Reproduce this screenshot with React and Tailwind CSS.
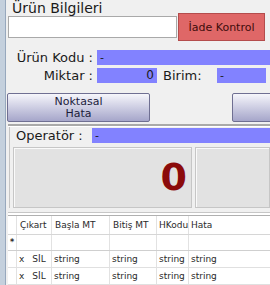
export default function App() {
  const rows = [
    { x: "x", sil: "SİL" },
    { x: "x", sil: "SİL" },
  ];

  return (
    <div className="w-[270px] h-[285px] overflow-hidden bg-[#f0f0f0] flex font-['DejaVu_Sans',sans-serif] text-[#1a1a1a]">
      {/* left strip */}
      <div className="w-[6px] shrink-0 bg-[#c4d0dd] border-r border-[#97a8bd]" />

      <div className="flex-1 min-w-0 flex flex-col pl-[2px]">
        {/* Title */}
        <div className="h-[13px] pl-[4px] text-[14px] leading-[16px] whitespace-nowrap">Ürün Bilgileri</div>

        {/* Input + İade Kontrol */}
        <div className="flex items-center h-[28px] gap-[1px]">
          <div className="w-[169px] h-[22px] bg-white border border-[#a9a9a9]" />
          <button className="w-[87px] h-[28px] bg-[#df6767] border border-[#b44c4c] text-[11px] text-[#3e0c0c] leading-none">
            İade Kontrol
          </button>
        </div>

        {/* Ürün Kodu */}
        <div className="flex items-center h-[15px] mt-[9px]">
          <div className="w-[85px] text-right text-[13px] leading-[15px] whitespace-nowrap">Ürün Kodu :</div>
          <div className="ml-[4px] flex-1 h-[15px] bg-[#8282ff] text-[11px] leading-[15px] pl-[3px]">-</div>
        </div>

        {/* Miktar / Birim */}
        <div className="flex items-center h-[15px] mt-[3px]">
          <div className="w-[85px] text-right text-[13px] leading-[15px] whitespace-nowrap">Miktar :</div>
          <div className="ml-[4px] w-[60px] h-[15px] bg-[#8282ff] text-[12px] leading-[15px] text-right pr-[3px]">0</div>
          <div className="ml-[6px] w-[54px] text-[13px] leading-[15px]">Birim:</div>
          <div className="w-[49px] h-[15px] bg-[#8282ff] text-[11px] leading-[15px] pl-[3px]">-</div>
        </div>

        {/* Buttons */}
        <div className="flex h-[29px] mt-[10px]">
          <button className="-ml-px w-[143px] shrink-0 h-[29px] rounded-[2px] border border-[#6f6f92] bg-gradient-to-b from-[#f6f6fb] to-[#a6a6ca] text-[11px] leading-[12px] text-[#1c1c3c]">
            Noktasal<br />Hata
          </button>
          <button className="ml-[82px] w-[60px] shrink-0 h-[29px] rounded-[2px] border border-[#6f6f92] bg-gradient-to-b from-[#f6f6fb] to-[#a6a6ca]" />
        </div>

        {/* separator */}
        <div className="mt-[2px] h-[3px] border-t-2 border-[#a9a9a9] bg-white" />

        {/* Operatör section */}
        <div className="ml-[1px] border-l border-[#c4c4c4] flex flex-col">
          <div className="flex items-center h-[15px] mt-[1px]">
            <div className="w-[82px] pl-[6px] text-[13px] leading-[15px] whitespace-nowrap">Operatör :</div>
            <div className="flex-1 h-[15px] bg-[#8282ff] text-[11px] leading-[15px] pl-[3px]">-</div>
          </div>
          <div className="flex h-[61px] mt-[4px] pl-[3px] gap-[3px]">
            <div className="w-[179px] shrink-0 bg-[#e2e2e2] border border-[#c6c6c6] shadow-[inset_1px_1px_0_#fafafa] flex items-center justify-end pr-[4px]">
              <span className="text-[38px] leading-none font-bold text-[#8b0b0b] mb-[2px]">0</span>
            </div>
            <div className="flex-1 bg-[#e2e2e2] border border-[#c6c6c6] shadow-[inset_1px_1px_0_#fafafa]" />
          </div>
        </div>

        {/* separator */}
        <div className="mt-[4px] h-[4px] border-t border-b border-t-[#c6c6c6] border-b-[#b0b0b0] bg-white" />

        {/* Grid */}
        <div className="flex-1 bg-white text-[9px] leading-none text-[#2a2a2a]">
          <div className="flex h-[19px] border-b border-[#d6d6d6] items-center">
            <div className="w-[9px] h-full border-r border-[#e2e2e2]" />
            <div className="w-[35px] h-full border-r border-[#e2e2e2] pl-[3px] flex items-center">Çıkart</div>
            <div className="w-[58px] h-full border-r border-[#e2e2e2] pl-[3px] flex items-center">Başla MT</div>
            <div className="w-[47px] h-full border-r border-[#e2e2e2] pl-[3px] flex items-center">Bitiş MT</div>
            <div className="w-[32px] h-full border-r border-[#e2e2e2] pl-[2px] flex items-center whitespace-nowrap overflow-hidden">HKodu</div>
            <div className="flex-1 h-full pl-[2px] flex items-center">Hata</div>
          </div>
          <div className="flex h-[16px] border-b border-[#cfcfcf]">
            <div className="w-[9px] h-full border-r border-[#e2e2e2] flex items-center justify-center text-[8px] font-bold">*</div>
            <div className="w-[35px] h-full border-r border-[#e2e2e2]" />
            <div className="w-[58px] h-full border-r border-[#e2e2e2]" />
            <div className="w-[47px] h-full border-r border-[#e2e2e2]" />
            <div className="w-[32px] h-full border-r border-[#e2e2e2]" />
            <div className="flex-1 h-full" />
          </div>
          {rows.map((r, i) => (
            <div key={i} className="flex h-[17px] border-b border-[#e0e0e0] items-center">
              <div className="w-[9px] h-full border-r border-[#e2e2e2]" />
              <div className="w-[35px] h-full border-r border-[#e2e2e2] pl-[2px] flex items-center gap-[8px]">
                <span>{r.x}</span>
                <span>{r.sil}</span>
              </div>
              <div className="w-[58px] h-full border-r border-[#e2e2e2] pl-[2px] flex items-center">string</div>
              <div className="w-[47px] h-full border-r border-[#e2e2e2] pl-[2px] flex items-center">string</div>
              <div className="w-[32px] h-full border-r border-[#e2e2e2] pl-[2px] flex items-center">string</div>
              <div className="flex-1 h-full pl-[2px] flex items-center">string</div>
            </div>
          ))}
        </div>
      </div>
    </div>
  );
}
